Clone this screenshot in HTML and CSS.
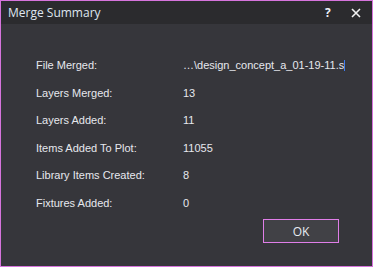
FILE: index.html
```html
<!DOCTYPE html>
<html lang="en">

<head>
    <meta charset="UTF-8">
    <title>Merge Summary</title>
    <link rel="stylesheet" href="styles.css">
</head>

<body>
    <div class="dialog">
        <div class="titlebar">
            <span class="title">Merge Summary</span>
            <span class="help">?</span>
            <span class="close">
                <svg width="10" height="10" viewBox="0 0 10 10">
                    <path d="M1 1 L9 9 M9 1 L1 9" stroke="#f2f2f2" stroke-width="1.6" fill="none" />
                </svg>
            </span>
        </div>
        <div class="content">
            <div class="row">
                <span class="label">File Merged:</span>
                <span class="value file"><span class="path">…\design_concept_a_01-19-11.s</span><span class="caret"></span></span>
            </div>
            <div class="row">
                <span class="label">Layers Merged:</span>
                <span class="value">13</span>
            </div>
            <div class="row">
                <span class="label">Layers Added:</span>
                <span class="value">11</span>
            </div>
            <div class="row">
                <span class="label">Items Added To Plot:</span>
                <span class="value">11055</span>
            </div>
            <div class="row">
                <span class="label">Library Items Created:</span>
                <span class="value">8</span>
            </div>
            <div class="row">
                <span class="label">Fixtures Added:</span>
                <span class="value">0</span>
            </div>
        </div>
        <div class="footer">
            <button class="ok">OK</button>
        </div>
    </div>
</body>

</html>
```

FILE: styles.css
```css
* {
    margin: 0;
    padding: 0;
    box-sizing: border-box;
}

body {
    width: 373px;
    height: 267px;
    overflow: hidden;
    background: #36363b;
}

.dialog {
    width: 373px;
    height: 267px;
    border: 1px solid #d674dc;
    background: #36363b;
    display: flex;
    flex-direction: column;
}

.titlebar {
    height: 23px;
    background: #2b2b2e;
    display: flex;
    align-items: center;
    padding-left: 7px;
    font-family: "Open Sans", "Noto Sans", sans-serif;
    font-size: 12px;
    color: #dfe6f0;
}

.title {
    flex: 1;
    padding-bottom: 1px;
}

.help {
    width: 10px;
    margin-right: 16px;
    font-weight: bold;
    font-size: 12px;
    color: #eef2f8;
    padding-bottom: 1px;
}

.close {
    width: 10px;
    height: 10px;
    margin-right: 11px;
    display: flex;
}

.content {
    padding-top: 28px;
    padding-left: 35px;
    font-family: "Liberation Sans", Arial, sans-serif;
    font-size: 11px;
    color: #e6e8ee;
}

.row {
    display: flex;
    height: 27.5px;
    line-height: 27.5px;
}

.label {
    width: 147px;
}

.value.file {
    display: flex;
    align-items: center;
}

.path {
    white-space: nowrap;
}

.caret {
    width: 1px;
    height: 11px;
    margin-left: 0;
    background: #3d7cf0;
}

.footer {
    margin-top: auto;
    display: flex;
    justify-content: flex-end;
    padding-right: 33px;
    padding-bottom: 23px;
}

.ok {
    width: 76px;
    height: 24px;
    border: 1px solid #e07ee8;
    background: #414146;
    color: #e8ecf2;
    font-family: "Open Sans", "Noto Sans", sans-serif;
    font-size: 12px;
}
```
